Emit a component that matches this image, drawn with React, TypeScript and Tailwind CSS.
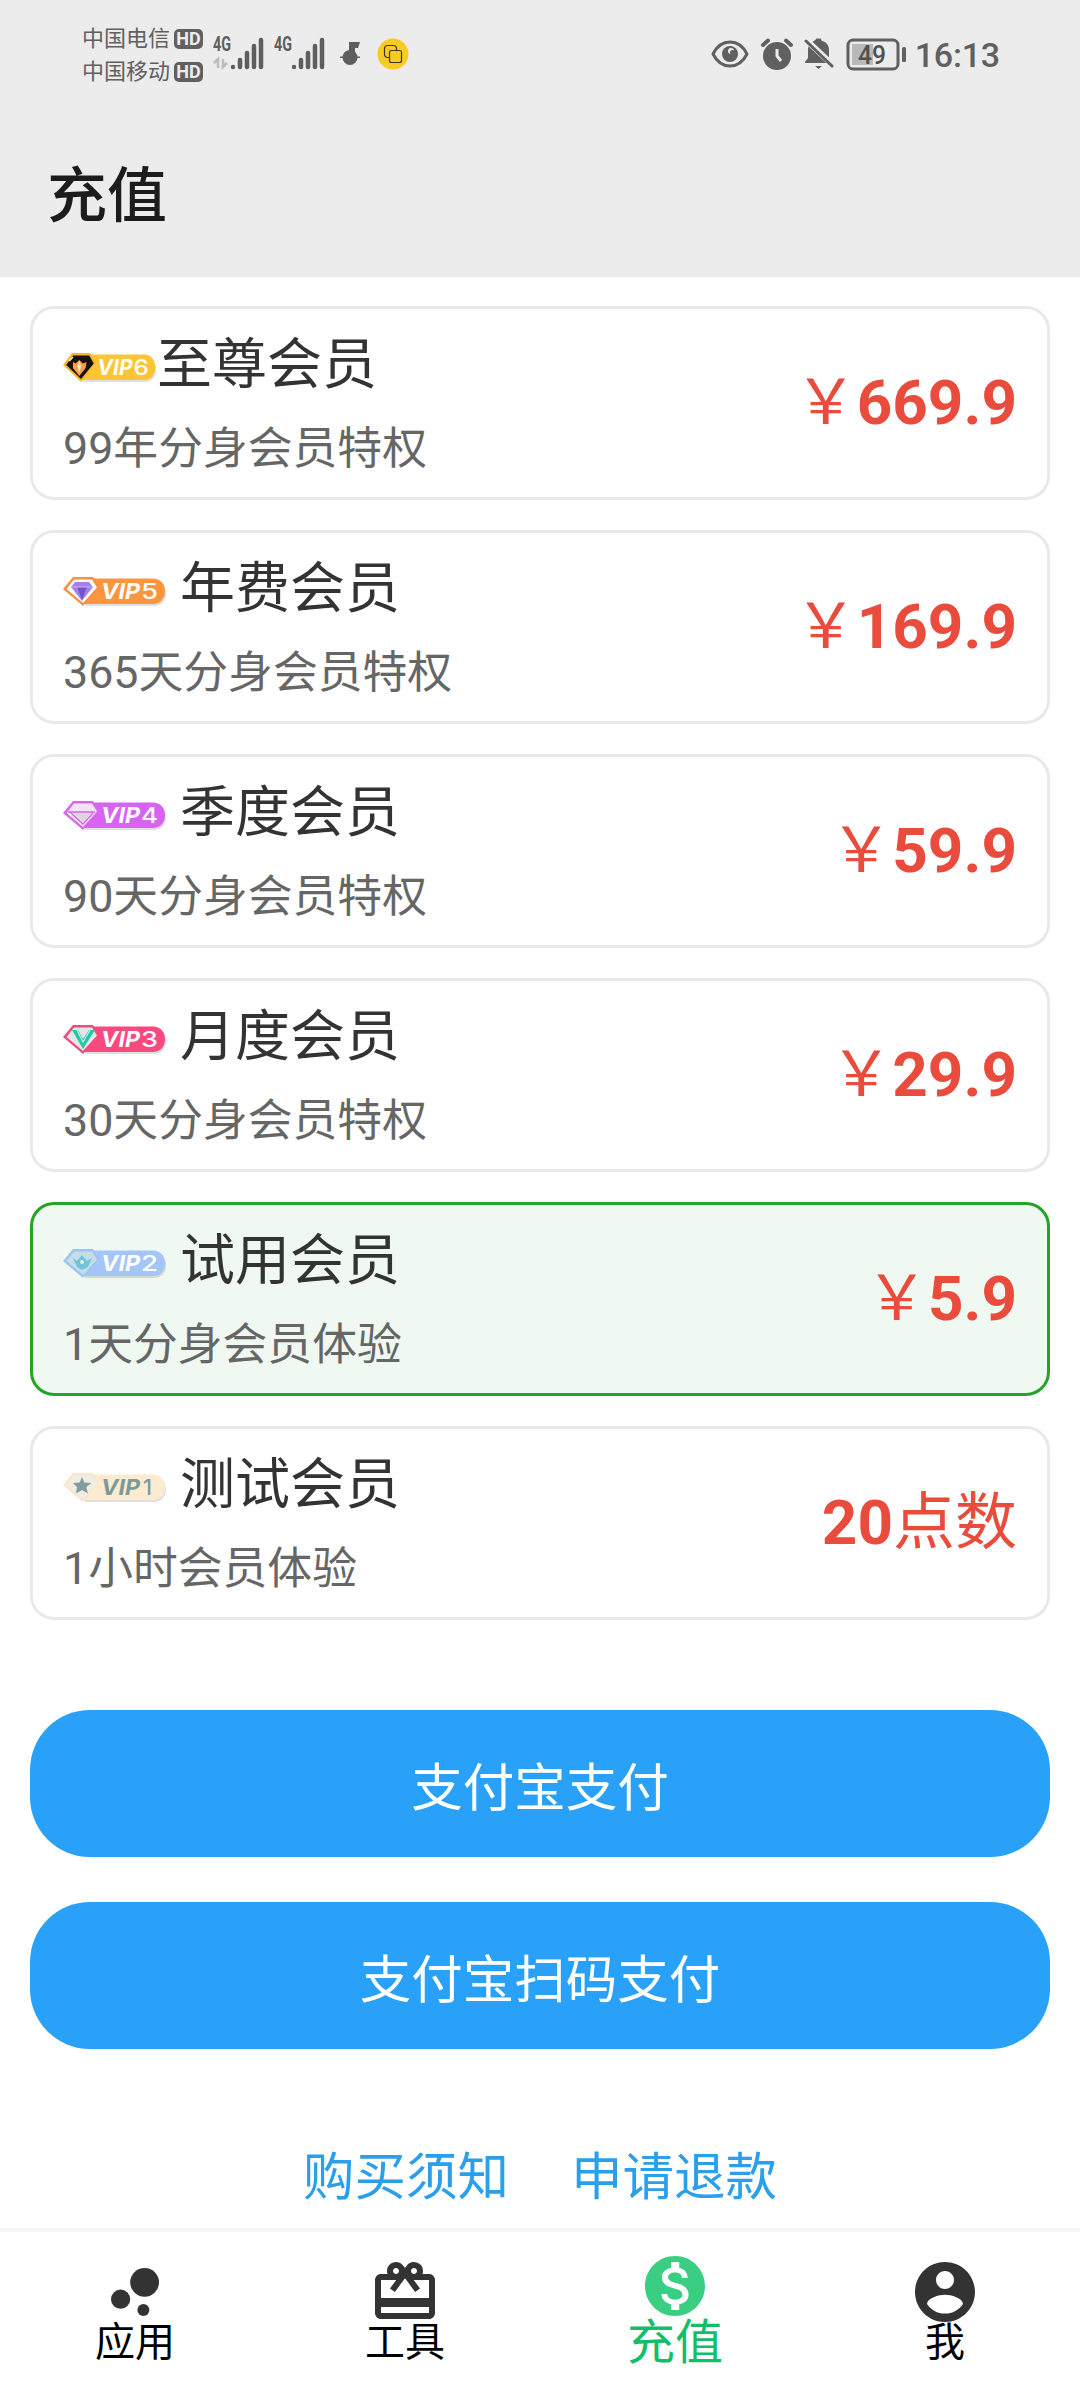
import React from 'react';
import { MdBubbleChart, MdCardGiftcard } from 'react-icons/md';

type Plan = {
    id: number;
    title: string;
    desc: string;
    price: string;
    unit?: string;
    active?: boolean;
};

const plans: Plan[] = [
    { id: 6, title: '至尊会员', desc: '99年分身会员特权', price: '669.9' },
    { id: 5, title: '年费会员', desc: '365天分身会员特权', price: '169.9' },
    { id: 4, title: '季度会员', desc: '90天分身会员特权', price: '59.9' },
    { id: 3, title: '月度会员', desc: '30天分身会员特权', price: '29.9' },
    { id: 2, title: '试用会员', desc: '1天分身会员体验', price: '5.9', active: true },
    { id: 1, title: '测试会员', desc: '1小时会员体验', price: '20', unit: '点数' },
];

const badgeColors: Record<number, { body: string; edge: string; gem: string; text: string }> = {
    6: { body: '#fdc535', edge: '#fdb52a', gem: '#17120f', text: '#ffffff' },
    5: { body: '#fd9540', edge: '#fd8f3c', gem: '#ffffff', text: '#ffffff' },
    4: { body: '#da62f2', edge: '#d768ea', gem: '#f3e3f7', text: '#ffffff' },
    3: { body: '#f9497f', edge: '#ee4a7c', gem: '#e4e6e6', text: '#ffffff' },
    2: { body: '#a3c5f8', edge: '#9fc3f2', gem: '#c5dde6', text: '#ffffff' },
    1: { body: '#fdebd0', edge: '#fbe6cb', gem: '#f0ece6', text: '#7b9a9c' },
};

const GemDetail = ({ id }: { id: number }) => {
    switch (id) {
        case 6:
            return (
                <>
                    <path d="M11 10l3 1.5 4-3.5 4 3.5 4-1.5-1 6-7 8-7-8z" fill="#f8a050" />
                    <path d="M18 9l2 5-2 7-2-7z" fill="#ffe9b8" />
                    <path d="M7 9l4-4" stroke="#fff" strokeWidth="1.5" />
                </>
            );
        case 5:
            return (
                <>
                    <path d="M12 6h14l4 5-11 14L8 11z" fill="#a183e8" />
                    <path d="M14 11h10l-5 13z" fill="#7650ce" />
                    <path d="M8 11h22" stroke="#c8b6f5" strokeWidth="1" />
                </>
            );
        case 4:
            return (
                <>
                    <path d="M5 12h27M8 13l12 11 10-11" stroke="#cf68df" strokeWidth="1.3" fill="none" />
                    <path d="M10 13h18l-8 9z" fill="#dfd3e3" />
                </>
            );
        case 3:
            return (
                <>
                    <path d="M9 6h6l5 9 6-9h6L20 25z" fill="#27c5a7" />
                    <path d="M14 6l6 12 7-12" stroke="#baf3e6" strokeWidth="1.2" fill="none" />
                </>
            );
        case 2:
            return (
                <>
                    <path d="M10 10l4 3 5-6 5 6 5-3-4 9-6 3-5-3z" fill="#70c3dc" />
                    <circle cx="19" cy="14" r="2" fill="#e8f3d9" />
                </>
            );
        default:
            return <path d="M19 5l2.4 5.4 7 .6-5 4 1.5 6.5-5.9-3.5-6 3.5L14 15l-4-4 6.6-.6z" fill="#829b9b" />;
    }
};

const VipBadge = ({ id }: { id: number }) => {
    const c = badgeColors[id];
    return (
        <svg
            viewBox="0 0 104 32"
            preserveAspectRatio="none"
            className={id === 6 ? 'mt-2 h-8 w-[94px] shrink-0' : 'mt-2 h-8 w-[104px] shrink-0'}
        >
            <path d="M22 5h69c7 0 12 5 12 12.5S98 30 91 30H22z" fill="#000" opacity=".12" />
            <path d="M20 2.5h70c7 0 12 5 12 12.8S97 28 90 28H20z" fill={c.body} />
            <path d="M10 1h20l6 10-16 19L0 13z" fill={c.edge} />
            <path d="M11 3.5h18l5 8-14 15.5L3.5 13z" fill={c.gem} />
            <GemDetail id={id} />
            <text
                x="38"
                y="23"
                fill={c.text}
                fontSize="22"
                fontWeight="700"
                fontStyle="italic"
                fontFamily="Inter, sans-serif"
                textLength="39"
                lengthAdjust="spacingAndGlyphs"
            >
                VIP
            </text>
            <text
                x={id === 1 ? 80 : 78}
                y="23"
                fill={c.text}
                fontSize="22"
                fontWeight="500"
                fontFamily="Inter, sans-serif"
                textLength={id === 1 ? 9 : 17}
                lengthAdjust="spacingAndGlyphs"
            >
                {id}
            </text>
        </svg>
    );
};

const Carrier = ({ name }: { name: string }) => (
    <div className="flex h-[33px] items-center">
        <span className="text-[22px] leading-none">{name}</span>
        <span className="ml-1 flex h-5 w-[29px] items-center justify-center rounded-[5px] bg-[#606060] text-[18px] font-bold leading-none text-[#ececec]">
            HD
        </span>
    </div>
);

const Signal = ({ data }: { data?: boolean }) => (
    <svg width="52" height="44" viewBox="0 -8 52 44" fill="none">
        <text x="0" y="14" fill="#5e5e5e" fontSize="20" fontWeight="700" fontFamily="Roboto, sans-serif" textLength="18" lengthAdjust="spacingAndGlyphs">
            4G
        </text>
        {data && <path d="M5 31V22l-4 4M10 22v8l4-4" stroke="#bcbcbc" strokeWidth="2.5" />}
        <path d="M20 30v0M27 23v7M34 16v14M41 9v21M48 3v27" stroke="#5e5e5e" strokeWidth="4.5" strokeLinecap="round" />
    </svg>
);

const StatusBar = () => (
    <div className="flex h-[110px] items-start justify-between pl-[82px] pr-[80px] text-[#606060]">
        <div className="flex items-start">
            <div className="mt-[22px] flex flex-col">
                <Carrier name="中国电信" />
                <Carrier name="中国移动" />
            </div>
            <div className="ml-[10px] mt-[29px] flex gap-[9px]">
                <Signal data />
                <Signal />
            </div>
            <svg width="22" height="26" viewBox="0 0 22 26" className="ml-[14px] mt-[41px]" fill="#5e5e5e">
                <path d="M9 1h11l-2 6h-3v8H9z" />
                <circle cx="10" cy="16.5" r="7.5" />
                <path d="M0 15.5h20V17H0z" />
            </svg>
            <svg width="32" height="32" viewBox="0 0 32 32" className="ml-[15px] mt-[38px]" fill="none">
                <circle cx="16" cy="16" r="15.5" fill="#f7cb23" />
                <rect x="7.5" y="7.5" width="12" height="12" rx="3" stroke="#3e3512" strokeWidth="1.2" />
                <rect x="12.5" y="12.5" width="12" height="12" rx="2" fill="#f7cb23" stroke="#3e3512" strokeWidth="1.2" />
            </svg>
        </div>
        <div className="flex items-start">
            <svg width="38" height="30" viewBox="0 0 38 30" className="mt-[39px]" fill="none">
                <path d="M2 15C6 7 12 3 19 3s13 4 17 12c-4 8-10 12-17 12S6 23 2 15z" stroke="#606060" strokeWidth="3" strokeLinejoin="round" />
                <circle cx="19" cy="15" r="8" fill="#606060" />
                <circle cx="20" cy="12" r="3" fill="#ececec" />
                <circle cx="21.5" cy="13.5" r="2.5" fill="#606060" />
            </svg>
            <svg width="34" height="33" viewBox="0 0 34 33" className="ml-[11px] mt-[38px]" fill="none">
                <circle cx="17" cy="18" r="14" fill="#606060" />
                <path d="M1 8l8-8M25 0l8 8" stroke="#ececec" strokeWidth="8" />
                <path d="M3 7l5-4.500M26 2.500L31 7" stroke="#606060" strokeWidth="4" strokeLinecap="round" />
                <path d="M17 11v7l4 5" stroke="#ececec" strokeWidth="3" />
            </svg>
            <svg width="30" height="33" viewBox="0 0 30 33" className="ml-[10px] mt-[38px]">
                <path d="M10 3c1-1 2-1.500 2.500-2.500h4L18 3c5 1 7 5 7 9v9l3 4H1c0-3 3-3 3-6v-7c0-5 3-8 6-9z" fill="#606060" />
                <path d="M11 28h7l-3.500 3z" fill="#606060" />
                <path d="M0 0l30 28" stroke="#ececec" strokeWidth="6" />
                <path d="M2 3l26 25" stroke="#606060" strokeWidth="3" strokeLinecap="round" />
            </svg>
            <svg width="62" height="34" viewBox="0 0 62 34" className="ml-[12px] mt-[38px]" fill="none">
                <rect x="2" y="2" width="50" height="29" rx="5" stroke="#606060" strokeWidth="3" />
                <rect x="6" y="6" width="21" height="21" fill="#b9b9b9" />
                <rect x="56" y="9" width="4" height="15" rx="1.5" fill="#606060" />
                <text x="12" y="25.5" fill="#505050" fontSize="26" fontWeight="500" fontFamily="Roboto, sans-serif" textLength="28" lengthAdjust="spacingAndGlyphs">
                    49
                </text>
            </svg>
            <span className="ml-[7px] mt-[38px] text-[34px] font-medium leading-[34px] tracking-[-0.2px]">16:13</span>
        </div>
    </div>
);

const PlanCard = ({ plan }: { plan: Plan }) => (
    <div
        className={`flex h-[194px] items-center justify-between rounded-[24px] border-[3px] pl-[30px] pr-[30px] ${
            plan.active ? 'border-[#26a226] bg-[#eff8f1]' : 'border-[#e9e9e9] bg-white'
        }`}
    >
        <div className="flex h-full flex-col">
            <div className="mt-[23px] flex h-16 items-center">
                <VipBadge id={plan.id} />
                <span className={`text-[55px] leading-[64px] text-[#333333] ${plan.id === 6 ? '' : 'ml-[13px]'}`}>
                    {plan.title}
                </span>
            </div>
            <span className="mt-[25px] text-[44.8px] leading-[56px] text-[#666666]">{plan.desc}</span>
        </div>
        <div className="flex items-baseline text-[62px] leading-[70px] text-[#e94b3c]">
            {!plan.unit && <span>￥</span>}
            <span className="font-bold">{plan.price}</span>
            {plan.unit && <span>{plan.unit}</span>}
        </div>
    </div>
);

const PayButton = ({ label }: { label: string }) => (
    <button className="flex h-[147px] w-full items-center justify-center rounded-[60px] bg-[#2aa1f8] pt-[10px] text-[51.5px] text-white">
        {label}
    </button>
);

const TabBar = () => (
    <nav className="grid h-[168px] grid-cols-4 bg-white text-[40px] leading-[44px] text-black">
        <div className="flex flex-col items-center pt-[24px]">
            <MdBubbleChart className="size-[72px] text-[#333333]" />
            <span className="-mt-[7px]">应用</span>
        </div>
        <div className="flex flex-col items-center pt-[24px]">
            <MdCardGiftcard className="size-[72px] text-[#333333]" />
            <span className="-mt-[7px]">工具</span>
        </div>
        <div className="flex flex-col items-center pt-[18px]">
            <svg viewBox="0 0 24 24" className="size-[72px] fill-[#3ace82]">
                <path d="M12 2C6.48 2 2 6.48 2 12s4.48 10 10 10 10-4.48 10-10S17.52 2 12 2zm1.41 16.09V20h-2.67v-1.93c-1.71-.36-3.16-1.46-3.27-3.4h1.96c.1 1.05.82 1.87 2.65 1.87 1.96 0 2.4-.98 2.4-1.59 0-.83-.44-1.61-2.67-2.14-2.48-.6-4.18-1.62-4.18-3.67 0-1.72 1.39-2.84 3.11-3.21V4h2.67v1.95c1.86.45 2.79 1.86 2.85 3.39H14.3c-.05-1.11-.64-1.87-2.22-1.87-1.5 0-2.4.68-2.4 1.64 0 .84.65 1.39 2.67 1.91s4.18 1.39 4.18 3.91c-.01 1.83-1.38 2.83-3.12 3.16z" />
            </svg>
            <span className="-mt-[1px] text-[48px] text-[#12be68]">充值</span>
        </div>
        <div className="flex flex-col items-center pt-[24px]">
            <svg viewBox="0 0 24 24" className="size-[72px] fill-[#333333]">
                <path d="M12 2C6.48 2 2 6.48 2 12s4.48 10 10 10 10-4.48 10-10S17.52 2 12 2zm0 3c1.66 0 3 1.34 3 3s-1.34 3-3 3-3-1.34-3-3 1.34-3 3-3zm0 14.2c-2.5 0-4.71-1.28-6-3.22.03-1.99 4-3.08 6-3.08 1.99 0 5.97 1.09 6 3.08-1.29 1.94-3.5 3.22-6 3.22z" />
            </svg>
            <span className="-mt-[7px]">我</span>
        </div>
    </nav>
);

const App = () => {
    return (
        <div className="flex h-[2400px] w-[1080px] flex-col overflow-hidden bg-white font-['Roboto','Noto_Sans_CJK_SC',sans-serif]">
            <header className="h-[277px] bg-[#ececec]">
                <StatusBar />
                <h1 className="pl-[47px] pt-[47px] text-[60px] font-medium leading-[80px] text-[#1c1c1c]">充值</h1>
            </header>

            <main className="flex flex-1 flex-col px-[30px] pt-[29px]">
                <div className="flex flex-col gap-[30px]">
                    {plans.map((plan) => (
                        <PlanCard key={plan.id} plan={plan} />
                    ))}
                </div>

                <div className="mt-[90px] flex flex-col gap-[45px]">
                    <PayButton label="支付宝支付" />
                    <PayButton label="支付宝扫码支付" />
                </div>

                <div className="mt-[97px] flex justify-center gap-[62px] text-[51.5px] leading-[64px] text-[#2b9fea]">
                    <a href="#notice">购买须知</a>
                    <a href="#refund">申请退款</a>
                </div>
            </main>

            <div className="h-1 bg-[#f6f6f6]" />
            <TabBar />
        </div>
    );
};

export default App;
